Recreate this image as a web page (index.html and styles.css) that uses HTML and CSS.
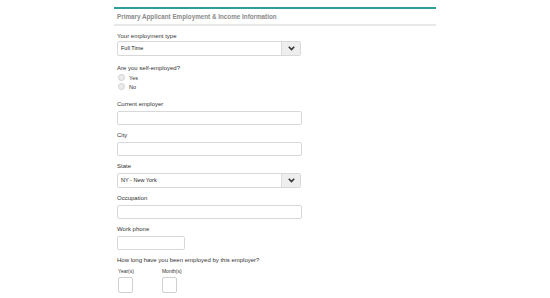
FILE: index.html
```html
<!DOCTYPE html>
<html lang="en">
<head>
    <meta charset="UTF-8">
    <title>Employment & Income</title>
    <link rel="stylesheet" href="styles.css">
</head>
<body>
    <section class="panel">
        <h2 class="panel-title">Primary Applicant Employment &amp; Income Information</h2>

        <div class="form">
            <div class="field first-field">
                <label>Your employment type</label>
                <div class="select">
                    <span class="select-value">Full Time</span>
                    <span class="select-arrow">
                        <svg width="7" height="5" viewBox="0 0 7 5"><path d="M0.8 0.8 L3.5 3.6 L6.2 0.8" fill="none" stroke="#333" stroke-width="1.6"/></svg>
                    </span>
                </div>
            </div>

            <div class="field radio-field">
                <label>Are you self-employed?</label>
                <div class="radio"><span class="dot"></span>Yes</div>
                <div class="radio"><span class="dot"></span>No</div>
            </div>

            <div class="field">
                <label>Current employer</label>
                <input type="text" class="text-input">
            </div>

            <div class="field">
                <label>City</label>
                <input type="text" class="text-input">
            </div>

            <div class="field">
                <label>State</label>
                <div class="select">
                    <span class="select-value">NY - New York</span>
                    <span class="select-arrow">
                        <svg width="7" height="5" viewBox="0 0 7 5"><path d="M0.8 0.8 L3.5 3.6 L6.2 0.8" fill="none" stroke="#333" stroke-width="1.6"/></svg>
                    </span>
                </div>
            </div>

            <div class="field">
                <label>Occupation</label>
                <input type="text" class="text-input">
            </div>

            <div class="field">
                <label>Work phone</label>
                <input type="text" class="text-input short">
            </div>

            <div class="field">
                <label>How long have you been employed by this employer?</label>
                <div class="duration">
                    <div class="duration-item">
                        <span class="small-label">Year(s)</span>
                        <input type="text" class="box-input">
                    </div>
                    <div class="duration-item">
                        <span class="small-label">Month(s)</span>
                        <input type="text" class="box-input">
                    </div>
                </div>
            </div>
        </div>
    </section>
</body>
</html>
```

FILE: styles.css
```css
/* General styles */
body {
    margin: 0;
    background: #ffffff;
    font-family: "Liberation Sans", Arial, sans-serif;
    color: #333;
}

.panel {
    width: 322px;
    margin: 7px 0 0 114px;
}

.panel-title {
    margin: 0;
    height: 15px;
    line-height: 15px;
    padding-left: 3px;
    border-top: 2px solid #2e9e9b;
    border-bottom: 2px solid #e8e8e8;
    font-size: 6.3px;
    font-weight: bold;
    color: #8a8a8a;
}

/* Form */
.form {
    padding: 6px 0 0 3px;
}

.field {
    margin-bottom: 6px;
}

.field label {
    display: block;
    font-size: 6px;
    line-height: 9px;
    margin-bottom: 2px;
}

.first-field {
    margin-bottom: 8px;
}

.first-field label {
    margin-bottom: 0;
}

.text-input {
    display: block;
    box-sizing: border-box;
    width: 185px;
    height: 14px;
    margin: 0;
    border: 1px solid #d8d8d8;
    border-radius: 2px;
    background: #fff;
}

.text-input.short {
    width: 68px;
}

/* Select */
.select {
    display: flex;
    box-sizing: border-box;
    width: 184px;
    height: 15px;
    border: 1px solid #d8d8d8;
    border-radius: 2px;
    font-size: 5.5px;
}

.select-value {
    flex: 1;
    line-height: 13px;
    padding-left: 3px;
    color: #222;
}

.select-arrow {
    width: 18px;
    display: flex;
    align-items: center;
    justify-content: center;
    background: #eeeeee;
    border-left: 1px solid #dcdcdc;
}

/* Radios */
.radio-field label {
    margin-bottom: 0;
}

.radio {
    display: flex;
    align-items: center;
    height: 9px;
    font-size: 5.5px;
    padding-left: 1px;
}

.dot {
    width: 5px;
    height: 5px;
    border: 1px solid #d0d0d0;
    border-radius: 50%;
    background: #ececec;
    margin-right: 4px;
}

.radio-field {
    margin-bottom: 9px;
}

/* Duration */
.duration {
    display: flex;
    gap: 28px;
    padding-left: 1px;
}

.duration-item {
    display: flex;
    flex-direction: column;
}

.small-label {
    font-size: 5px;
    line-height: 8px;
    margin-bottom: 2px;
}

.box-input {
    box-sizing: border-box;
    width: 15px;
    height: 16px;
    margin: 0;
    border: 1px solid #d0d0d0;
    border-radius: 2px;
}
```
